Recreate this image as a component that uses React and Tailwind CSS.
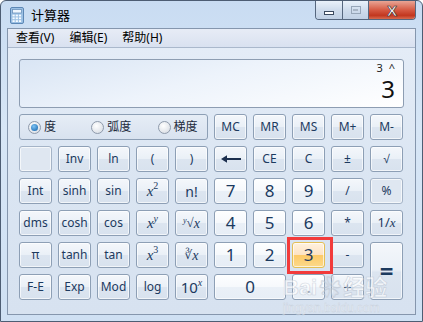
import React from 'react';

const CJK = '"Noto Sans", "Noto Sans CJK SC", sans-serif';

const fnBtn =
  'bg-[linear-gradient(#f4f7fb_0%,#eaf0f7_48%,#dce5f0_52%,#d8e2ee_100%)] border-[#8d9fb5]';
const digitBtn =
  'bg-[linear-gradient(#fdfeff_0%,#f6f9fc_48%,#eaf0f7_52%,#e7eef6_100%)] border-[#8d9fb5]';
const flatBtn = 'bg-[#dfe7f1] border-[#a5b4c7]';
const hotBtn =
  'bg-[linear-gradient(#fff1de_0%,#fde3c4_48%,#fdca68_52%,#fcd98a_100%)] border-[#e3bf55]';

const Italic = ({ children }) => (
  <span className="italic" style={{ fontFamily: '"Liberation Serif", serif' }}>
    {children}
  </span>
);

const Btn = ({ children, kind = 'fn', className = '', size = 'text-[12px]' }) => {
  const look = kind === 'digit' ? digitBtn : kind === 'flat' ? flatBtn : kind === 'hot' ? hotBtn : fnBtn;
  return (
    <div
      className={`flex items-center justify-center rounded-[3px] border text-[#1c3a5f] shadow-[inset_0_0_0_1px_rgba(255,255,255,0.65)] ${look} ${size} ${className}`}
    >
      {children}
    </div>
  );
};

const CalcIcon = () => (
  <svg width="14" height="17" viewBox="0 0 14 17">
    <rect x="0.5" y="0.5" width="13" height="16" rx="1.5" fill="#9cc0e4" stroke="#5c87b5" />
    <rect x="2.5" y="2.5" width="9" height="3.5" fill="#eef6ff" stroke="#6d93bb" strokeWidth="0.8" />
    {[0, 1, 2].map((r) =>
      [0, 1, 2].map((c) => (
        <rect key={`${r}-${c}`} x={2.5 + c * 3.2} y={7.6 + r * 2.8} width="2.2" height="1.8" fill="#f6fbff" />
      ))
    )}
  </svg>
);

const BackArrow = () => (
  <svg width="22" height="10" viewBox="0 0 22 10">
    <path d="M21 5H5" stroke="#1c2f4e" strokeWidth="2" />
    <path d="M1 5L7 1.2V8.8Z" fill="#1c2f4e" />
  </svg>
);

const Radio = ({ checked, label, width }) => (
  <div className={`flex items-center gap-[3px] whitespace-nowrap ${width}`}>
    <div className="w-[13px] h-[13px] shrink-0 rounded-full border border-[#8e9aab] flex items-center justify-center bg-[radial-gradient(circle_at_40%_35%,#ffffff,#d2d8e0)]">
      {checked && <div className="w-[7px] h-[7px] rounded-full bg-[radial-gradient(circle_at_40%_35%,#7ec3f4,#0e5fa8)]" />}
    </div>
    <span className="text-[12px] text-[#1d2b3c]">{label}</span>
  </div>
);

export default function App() {
  return (
    <div
      className="w-[423px] h-[322px] overflow-hidden flex flex-col bg-[linear-gradient(180deg,#c9dcf2_0%,#d7e6f6_40%,#cfe0f3_100%)] border border-[#4d5d73] rounded-t-[6px] relative"
      style={{ fontFamily: CJK }}
    >
      {/* title bar */}
      <div className="h-[27px] flex items-start">
        <div className="flex items-center gap-[7px] pl-[9px] pt-[6px]">
          <CalcIcon />
          <span className="text-[13px] text-black leading-none">计算器</span>
        </div>
        <div className="ml-auto mr-[6px] flex h-[19px] rounded-b-[4px] border border-t-0 border-[#56677e] overflow-hidden">
          <div className="w-[27px] flex items-center justify-center border-r border-[#56677e] bg-[linear-gradient(#e9f1fa,#cfdcec_50%,#c0d0e4)]">
            <div className="w-[10px] h-[4px] bg-white border border-[#3b4a5f] mt-[5px]" />
          </div>
          <div className="w-[26px] flex items-center justify-center border-r border-[#56677e] bg-[linear-gradient(#e9f1fa,#cfdcec_50%,#c0d0e4)]">
            <div className="w-[10px] h-[8px] border border-[#97a6b8] flex items-center justify-center">
              <div className="w-[5px] h-[2px] border border-[#a8b5c5]" />
            </div>
          </div>
          <div className="w-[46px] flex items-center justify-center bg-[linear-gradient(#e9a595,#d65a43_50%,#c2371f_80%,#d86a4e)]">
            <span
              className="text-white text-[15px] font-bold leading-none"
              style={{ fontFamily: '"Liberation Sans", sans-serif', WebkitTextStroke: '0.6px #3d2a2a' }}
            >
              X
            </span>
          </div>
        </div>
      </div>

      <div className="flex-1 flex px-[6px] pb-[6px]">
        <div className="flex-1 flex flex-col border border-[#8596ad]">
          {/* menu */}
          <div className="h-[19px] flex items-center gap-[15px] pl-[8px] text-[12px] text-black bg-[linear-gradient(#e7ecf6,#d9e1f0)] border-b border-[#aab8cc]">
            <span>查看(V)</span>
            <span>编辑(E)</span>
            <span>帮助(H)</span>
          </div>

          {/* client */}
          <div className="flex-1 bg-[linear-gradient(180deg,#e4ecf7_0%,#dae5f2_50%,#d7e2f0_100%)] px-[11px] pt-[11px]">
            <div className="h-[49px] rounded-[3px] border border-[#8d9db2] bg-[linear-gradient(165deg,#d9e5f4_0%,#edf3fb_45%,#ffffff_100%)] flex flex-col items-end pr-[8px] pt-[2px]">
              <div className="text-[11px] text-[#222] leading-none flex gap-[6px]" style={{ fontFamily: '"Noto Sans", sans-serif' }}>
                <span>3</span>
                <span>^</span>
              </div>
              <div className="text-[24px] text-[#111] leading-none mt-[4px]" style={{ fontFamily: '"Noto Sans", sans-serif' }}>
                3
              </div>
            </div>

            <div
              className="mt-[6px] grid grid-cols-[repeat(10,33px)] grid-rows-[repeat(6,26px)] gap-[6px]"
              style={{ fontFamily: '"Noto Sans", sans-serif' }}
            >
              <div
                className="col-span-5 rounded-[3px] border border-[#8d9fb5] bg-[linear-gradient(#e6edf6,#d8e2ef)] flex items-center pl-[8px]"
                style={{ fontFamily: CJK }}
              >
                <Radio checked label="度" width="w-[64px]" />
                <Radio label="弧度" width="w-[67px]" />
                <Radio label="梯度" width="w-[50px]" />
              </div>
              <Btn>MC</Btn>
              <Btn>MR</Btn>
              <Btn>MS</Btn>
              <Btn>M+</Btn>
              <Btn>M-</Btn>

              <Btn kind="flat" />
              <Btn>Inv</Btn>
              <Btn>ln</Btn>
              <Btn>(</Btn>
              <Btn>)</Btn>
              <Btn><BackArrow /></Btn>
              <Btn>CE</Btn>
              <Btn>C</Btn>
              <Btn>±</Btn>
              <Btn>√</Btn>

              <Btn>Int</Btn>
              <Btn>sinh</Btn>
              <Btn>sin</Btn>
              <Btn size="text-[15px]"><Italic>x</Italic><sup className="text-[10px]" style={{ fontFamily: '"Liberation Serif", serif' }}>2</sup></Btn>
              <Btn size="text-[14px]">n!</Btn>
              <Btn kind="digit" size="text-[17px]">7</Btn>
              <Btn kind="digit" size="text-[17px]">8</Btn>
              <Btn kind="digit" size="text-[17px]">9</Btn>
              <Btn>/</Btn>
              <Btn kind="flat">%</Btn>

              <Btn>dms</Btn>
              <Btn>cosh</Btn>
              <Btn>cos</Btn>
              <Btn size="text-[15px]"><Italic>x</Italic><sup className="text-[10px]"><Italic>y</Italic></sup></Btn>
              <Btn size="text-[14px]"><span className="text-[13px]" style={{ fontFamily: '"Liberation Serif", serif' }}><sup className="text-[8px] italic">y</sup>√</span><Italic>x</Italic></Btn>
              <Btn kind="digit" size="text-[17px]">4</Btn>
              <Btn kind="digit" size="text-[17px]">5</Btn>
              <Btn kind="digit" size="text-[17px]">6</Btn>
              <Btn>*</Btn>
              <Btn size="text-[13px]">1/<Italic>x</Italic></Btn>

              <Btn>π</Btn>
              <Btn>tanh</Btn>
              <Btn>tan</Btn>
              <Btn size="text-[15px]"><Italic>x</Italic><sup className="text-[10px]" style={{ fontFamily: '"Liberation Serif", serif' }}>3</sup></Btn>
              <Btn size="text-[14px]"><span style={{ fontFamily: '"DejaVu Serif", serif' }} className="text-[12px]">∛</span><Italic>x</Italic></Btn>
              <Btn kind="digit" size="text-[17px]">1</Btn>
              <Btn kind="digit" size="text-[17px]">2</Btn>
              <Btn kind="hot" size="text-[17px]">3</Btn>
              <Btn>-</Btn>
              <Btn className="row-span-2" size="text-[24px] font-bold">=</Btn>

              <Btn>F-E</Btn>
              <Btn>Exp</Btn>
              <Btn>Mod</Btn>
              <Btn>log</Btn>
              <Btn size="text-[15px]">10<sup className="text-[10px]"><Italic>x</Italic></sup></Btn>
              <Btn kind="digit" className="col-span-2" size="text-[17px]">0</Btn>
              <Btn kind="digit" size="text-[17px]">.</Btn>
              <Btn size="text-[14px]">+</Btn>
            </div>
          </div>
        </div>
      </div>

      {/* red highlight annotation */}
      <div className="absolute left-[286px] top-[236px] w-[46px] h-[37px] border-[3px] border-[#f23b3b]" />

      {/* watermark */}
      <div className="absolute left-[282px] top-[276px] flex flex-col items-start pointer-events-none opacity-60">
        <div
          className="text-[22px] font-bold leading-none text-white"
          style={{ fontFamily: '"Liberation Sans", "Noto Sans CJK SC", sans-serif', WebkitTextStroke: '0.6px #b9c3cf' }}
        >
          Bai<span className="mx-[2px]">❀</span>经验
        </div>
        <div
          className="text-[12px] leading-none mt-[3px] text-white"
          style={{ fontFamily: '"Liberation Sans", sans-serif', WebkitTextStroke: '0.4px #b9c3cf' }}
        >
          jingyan.baidu.com
        </div>
      </div>
    </div>
  );
}
